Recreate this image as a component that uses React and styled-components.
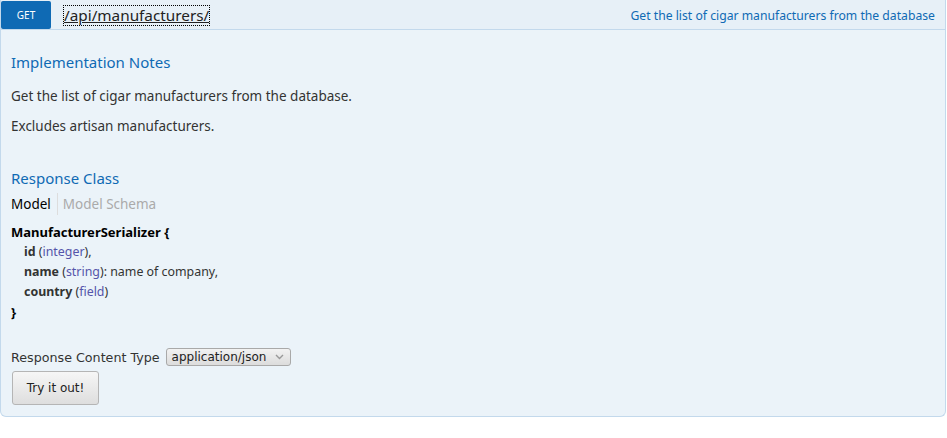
import React from 'react';
import styled, { createGlobalStyle } from 'styled-components';

const BLUE = '#0f6ab4';
const BORDER = '#c3d9ec';

const GlobalStyle = createGlobalStyle`
  body {
    margin: 0;
    background: #fff;
    font-family: "Noto Sans", "Open Sans", sans-serif;
    font-size: 13.5px;
    color: #333;
  }
`;

const Operation = styled.div`
  width: 946px;
`;

const Heading = styled.div`
  display: flex;
  align-items: center;
  height: 28px;
  background-color: #e7f0f7;
  border: 1px solid ${BORDER};
  border-top: none;
  padding-top: 1px;
`;

const Method = styled.a`
  display: flex;
  align-items: center;
  justify-content: center;
  width: 50px;
  height: 28px;
  border-radius: 2px;
  background-color: ${BLUE};
  color: #fff;
  font-size: 10px;
  text-transform: uppercase;
  text-decoration: none;
`;

const Path = styled.a`
  margin-left: 13px;
  font-size: 15.3px;
  line-height: 19px;
  color: #222;
  text-decoration: underline;
  outline: 1px dotted #000;
`;

const Summary = styled.span`
  margin-left: auto;
  padding-right: 10px;
  font-size: 12.2px;
  color: ${BLUE};
`;

const Content = styled.div`
  background-color: #ebf3f9;
  border: 1px solid ${BORDER};
  border-top: none;
  border-radius: 0 0 6px 6px;
  padding: 10px 10px 11px;
`;

const SectionTitle = styled.h4`
  margin: 0;
  padding: ${({ $top }) => $top}px 0 0;
  font-size: 15px;
  font-weight: normal;
  line-height: 20px;
  color: ${BLUE};
`;

const Para = styled.p`
  margin: ${({ $top }) => $top}px 0 0;
  line-height: 20px;
  color: #333;
`;

const Tabs = styled.ul`
  display: flex;
  align-items: center;
  list-style: none;
  margin: 5px 0 0;
  padding: 0;
  line-height: 18px;
`;

const Tab = styled.li`
  padding: 2px 6px 2px 0;
  color: ${({ $active }) => ($active ? '#000' : '#aaa')};
  & + & {
    border-left: 1px solid #ddd;
    padding-left: 5px;
  }
`;

const Signature = styled.div`
  margin-top: 7px;
  line-height: 20px;
  color: #333;
`;

const ClassName = styled.div`
  font-size: 13px;
  font-weight: bold;
  color: #000;
`;

const Prop = styled.div`
  margin-left: 13px;
  font-size: 12.4px;
`;

const PropName = styled.span`
  font-weight: bold;
`;

const PropType = styled.span`
  color: #5555aa;
`;

const ContentTypeRow = styled.div`
  display: flex;
  align-items: center;
  gap: 6px;
  margin-top: 25px;
  height: 20px;
  font-family: "DejaVu Sans", sans-serif;
  font-size: 12.7px;
  color: #333;
`;

const Select = styled.div`
  display: flex;
  align-items: center;
  gap: 9px;
  height: 16px;
  padding: 0 6px 0 5px;
  border: 1px solid #a9a9a9;
  border-radius: 3px;
  background: linear-gradient(#f2f2f2, #dcdcdc);
  font-size: 12px;
  color: #222;
`;

const Button = styled.button`
  display: block;
  margin: 4px 0 0 1px;
  width: 87px;
  height: 34px;
  border: 1px solid #b5b5b5;
  border-radius: 3px;
  background: linear-gradient(#f6f6f6, #dedede);
  font-family: "DejaVu Sans", sans-serif;
  font-size: 12px;
  color: #222;
`;

const Chevron = () => (
  <svg width="9" height="6" viewBox="0 0 9 6">
    <path d="M1 1 L4.5 4.5 L8 1" fill="none" stroke="#999" strokeWidth="1.4" />
  </svg>
);

const App = () => (
  <>
    <GlobalStyle />
    <Operation>
      <Heading>
        <Method href="#">Get</Method>
        <Path href="#">/api/manufacturers/</Path>
        <Summary>Get the list of cigar manufacturers from the database</Summary>
      </Heading>
      <Content>
        <SectionTitle $top={12}>Implementation Notes</SectionTitle>
        <Para $top={14}>Get the list of cigar manufacturers from the database.</Para>
        <Para $top={10}>Excludes artisan manufacturers.</Para>
        <SectionTitle $top={32}>Response Class</SectionTitle>
        <Tabs>
          <Tab $active>Model</Tab>
          <Tab>Model Schema</Tab>
        </Tabs>
        <Signature>
          <ClassName>ManufacturerSerializer {'{'}</ClassName>
          <Prop>
            <PropName>id</PropName> (<PropType>integer</PropType>),
          </Prop>
          <Prop>
            <PropName>name</PropName> (<PropType>string</PropType>): name of company,
          </Prop>
          <Prop>
            <PropName>country</PropName> (<PropType>field</PropType>)
          </Prop>
          <ClassName>{'}'}</ClassName>
        </Signature>
        <ContentTypeRow>
          Response Content Type
          <Select>
            application/json
            <Chevron />
          </Select>
        </ContentTypeRow>
        <Button>Try it out!</Button>
      </Content>
    </Operation>
  </>
);

export default App;
